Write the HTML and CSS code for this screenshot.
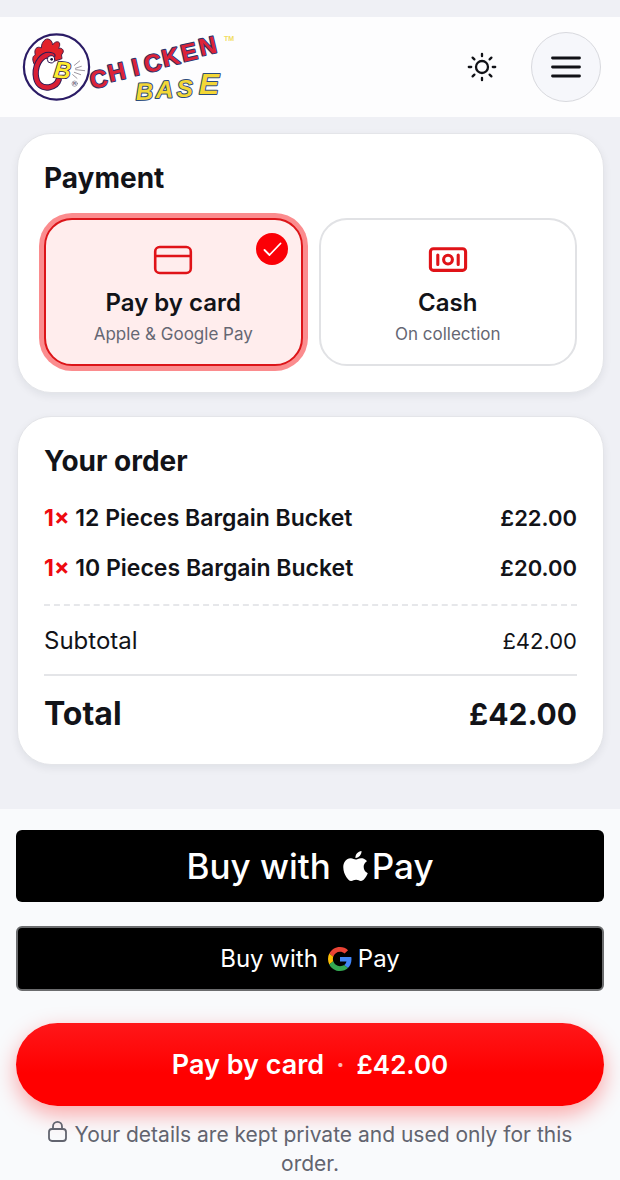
FILE: index.html
```html
<!DOCTYPE html>
<html lang="en">
<head>
<meta charset="utf-8">
<meta name="viewport" content="width=device-width, initial-scale=1">
<title>Chicken Base – Checkout</title>
<link rel="stylesheet" href="styles.css">
</head>
<body>
<header class="header">
  <a class="logo" href="#" aria-label="Chicken Base home">
    <svg width="214" height="74" viewBox="22 30 214 74" aria-hidden="true">
      <circle cx="56.5" cy="67" r="32.6" fill="#fff" stroke="#2b1c66" stroke-width="2.2"/>
      <g transform="translate(15 25) scale(.3333)" stroke-linecap="round" stroke-linejoin="round">
        <path d="M60 122 C50 106 52 92 61 90 C56 72 66 62 79 69 C79 51 92 38 102 43 C111 46 112 55 113 60 C120 47 134 48 134 57 C135 62 132 66 131 70 C144 67 149 80 141 87 C138 91 141 95 141 101 L120 108 L80 105 Z" fill="#e22229" stroke="#4b1d45" stroke-width="3"/>
        <path d="M74 118 C68 140 70 160 82 170 C94 180 116 172 124 160 L124 130 L106 106 L90 100 Z" fill="#fff"/>
        <path d="M112 92 C82 82 61 116 62 148 C64 180 82 190 102 187 C119 184 128 175 131 164" fill="none" stroke="#2f1a55" stroke-width="19"/>
        <path d="M112 92 C82 82 61 116 62 148 C64 180 82 190 102 187 C119 184 128 175 131 164" fill="none" stroke="#d91f35" stroke-width="13"/>
        <circle cx="108" cy="103" r="11" fill="#fff" stroke="#2f1a55" stroke-width="3"/>
        <circle cx="110" cy="103" r="4" fill="#16123a"/>
        <text class="logo-beak" x="115" y="157" transform="rotate(6 115 157)">B</text>
        <path d="M178 121 L194 108 M181 130 L199 124 M182 134 L209 137 M178 142 L197 149 M173 149 L186 160" fill="none" stroke="#6b6270" stroke-width="2"/>
        <circle cx="179" cy="176" r="8" fill="none" stroke="#55506a" stroke-width="1.5"/>
        <text class="logo-reg" x="174" y="181">R</text>
      </g>
      <text class="logo-chicken" x="92 110 134 146 164 183 201" y="89 82 76 73 67 62 56" rotate="-13">CHICKEN</text>
      <text class="logo-base" x="136 156 177" y="100 98 97" rotate="-2">BAS</text>
      <text class="logo-base logo-base-end" x="199" y="94">E</text>
      <text class="logo-tm" x="224" y="41">TM</text>
    </svg>
  </a>
  <div class="header-actions">
    <button class="theme-button" type="button" aria-label="Switch theme">
      <svg width="32" height="32" viewBox="0 0 32 32" fill="none" stroke="#101116" stroke-width="2.3" stroke-linecap="round" aria-hidden="true">
        <circle cx="16" cy="16" r="6"/>
        <path d="M16 2.8v2.4M16 26.8v2.4M2.8 16h2.4M26.8 16h2.4M6.6 6.6l1.8 1.8M23.6 23.6l1.8 1.8M6.6 25.4l1.8-1.8M23.6 8.4l1.8-1.8"/>
      </svg>
    </button>
    <button class="menu-button" type="button" aria-label="Open menu">
      <svg width="32" height="32" viewBox="0 0 32 32" fill="none" stroke="#101116" stroke-width="2.8" stroke-linecap="round" aria-hidden="true">
        <path d="M2.5 7h27M2.5 16h27M2.5 25h27"/>
      </svg>
    </button>
  </div>
</header>

<main class="content">
  <section class="card">
    <h2 class="card-title" id="payment-title">Payment</h2>
    <div class="options" role="radiogroup" aria-labelledby="payment-title">
      <label class="option">
        <input class="option-input" type="radio" name="payment" value="card" checked>
        <svg class="option-icon" width="40" height="40" viewBox="0 0 40 40" fill="none" stroke="#e01318" stroke-width="2.6" aria-hidden="true">
          <rect x="2.2" y="7" width="35.6" height="26" rx="4.5"/>
          <path d="M2 16h36"/>
        </svg>
        <span class="option-name">Pay by card</span>
        <span class="option-hint">Apple &amp; Google Pay</span>
        <span class="option-check">
          <svg width="32" height="32" viewBox="0 0 32 32" fill="none" stroke="#fff" stroke-width="1.8" stroke-linecap="round" stroke-linejoin="round" aria-hidden="true">
            <path d="M8.5 17l5 5L24.5 10.5"/>
          </svg>
        </span>
      </label>
      <label class="option">
        <input class="option-input" type="radio" name="payment" value="cash">
        <svg class="option-icon" width="40" height="40" viewBox="0 0 40 40" fill="none" stroke="#e01318" stroke-width="3.1" stroke-linecap="round" aria-hidden="true">
          <rect x="2.4" y="8.8" width="35.2" height="21.6" rx="3"/>
          <circle cx="20" cy="19.6" r="4.4"/>
          <path d="M9.8 15v9.4M30.2 15v9.4"/>
        </svg>
        <span class="option-name">Cash</span>
        <span class="option-hint">On collection</span>
        <span class="option-check">
          <svg width="32" height="32" viewBox="0 0 32 32" fill="none" stroke="#fff" stroke-width="1.8" stroke-linecap="round" stroke-linejoin="round" aria-hidden="true">
            <path d="M8.5 17l5 5L24.5 10.5"/>
          </svg>
        </span>
      </label>
    </div>
  </section>

  <section class="card">
    <h2 class="card-title">Your order</h2>
    <ul class="items">
      <li class="row"><span class="item-name"><b class="quantity">1×</b> 12 Pieces Bargain Bucket</span><span>£22.00</span></li>
      <li class="row"><span class="item-name"><b class="quantity">1×</b> 10 Pieces Bargain Bucket</span><span>£20.00</span></li>
    </ul>
    <div class="row subtotal"><span class="subtotal-label">Subtotal</span><span>£42.00</span></div>
    <div class="row total"><span class="total-label">Total</span><span>£42.00</span></div>
  </section>
</main>

<footer class="checkout">
  <button class="wallet apple-pay" type="button">
    <span>Buy with</span>
    <span class="wallet-brand">
      <svg width="25" height="30" viewBox="2 0 20 24" fill="#fff" aria-label="Apple" role="img"><path d="M12.152 6.896c-.948 0-2.415-1.078-3.96-1.04-2.04.027-3.91 1.183-4.961 3.014-2.117 3.675-.546 9.103 1.519 12.09 1.013 1.454 2.208 3.09 3.792 3.039 1.52-.065 2.09-.987 3.935-.987 1.831 0 2.35.987 3.96.948 1.637-.026 2.676-1.48 3.676-2.948 1.156-1.688 1.636-3.325 1.662-3.415-.039-.013-3.182-1.221-3.22-4.857-.026-3.04 2.48-4.494 2.597-4.559-1.429-2.09-3.623-2.324-4.39-2.376-2-.156-3.675 1.09-4.61 1.09zM15.53 3.83c.843-1.012 1.4-2.427 1.245-3.83-1.207.052-2.662.805-3.532 1.818-.78.896-1.454 2.338-1.273 3.714 1.338.104 2.715-.688 3.559-1.701"/></svg>
      <span>Pay</span>
    </span>
  </button>
  <button class="wallet google-pay" type="button">
    <span>Buy with</span>
    <span class="wallet-brand">
      <svg width="24" height="24" viewBox="0 0 48 48" aria-label="Google" role="img">
        <path fill="#EA4335" d="M24 9.5c3.54 0 6.71 1.22 9.21 3.6l6.85-6.85C35.9 2.38 30.47 0 24 0 14.62 0 6.51 5.38 2.56 13.22l7.98 6.19C12.43 13.72 17.74 9.5 24 9.5z"/>
        <path fill="#4285F4" d="M46.98 24.55c0-1.57-.15-3.09-.38-4.55H24v9.02h12.94c-.58 2.96-2.26 5.48-4.78 7.18l7.73 6c4.51-4.18 7.09-10.36 7.09-17.65z"/>
        <path fill="#FBBC05" d="M10.53 28.59c-.48-1.45-.76-2.99-.76-4.59s.27-3.14.76-4.59l-7.98-6.19C.92 16.46 0 20.12 0 24c0 3.88.92 7.54 2.56 10.78l7.97-6.19z"/>
        <path fill="#34A853" d="M24 48c6.48 0 11.93-2.13 15.89-5.81l-7.73-6c-2.15 1.45-4.92 2.3-8.16 2.3-6.26 0-11.57-4.22-13.47-9.91l-7.98 6.19C6.51 42.62 14.62 48 24 48z"/>
      </svg>
      <span>Pay</span>
    </span>
  </button>
  <button class="pay-button" type="button"><span class="pay-label">Pay by card</span><span class="pay-dot">·</span><span>£42.00</span></button>
  <p class="privacy">
    <svg class="lock" width="19" height="21" viewBox="0 0 19 21" fill="none" stroke="#62646f" stroke-width="1.8" aria-hidden="true">
      <rect x="1" y="8" width="17" height="12" rx="3"/>
      <path d="M5 8V5.400a4.500 4.500 0 0 1 9 0V8"/>
    </svg>
    Your details are kept private and used only for this order.
  </p>
</footer>
</body>
</html>
```
FILE: styles.css
```css
* {
  box-sizing: border-box;
}

body {
  margin: 0;
  padding-top: 17px;
  background: #eff0f5;
  color: #121318;
  font-family: Inter, "Noto Sans", sans-serif;
}

button {
  margin: 0;
  padding: 0;
  border: 0;
  font: inherit;
  cursor: pointer;
}

svg {
  display: block;
  flex-shrink: 0;
}

.header {
  display: flex;
  align-items: center;
  justify-content: space-between;
  min-height: 100px;
  padding: 0 19px 0 22px;
  background: #fdfdfe;
}

.logo-chicken,
.logo-base,
.logo-beak {
  font-family: "Liberation Sans", sans-serif;
  font-weight: 700;
  paint-order: stroke;
  stroke-linejoin: round;
}

.logo-chicken {
  font-size: 24px;
  fill: #dc2338;
  stroke: #28356f;
  stroke-width: 2px;
}

.logo-base {
  font-size: 24px;
  font-style: italic;
  fill: #f3d736;
  stroke: #2c4c7c;
  stroke-width: 2px;
}

.logo-base-end {
  font-size: 30px;
}

.logo-beak {
  font-size: 70px;
  font-style: italic;
  fill: #ffec2e;
  stroke: #2f1a55;
  stroke-width: 5px;
}

.logo-reg,
.logo-tm {
  font-family: "Liberation Sans", sans-serif;
  font-weight: 700;
}

.logo-reg {
  font-size: 13px;
  fill: #55506a;
}

.logo-tm {
  font-size: 7px;
  fill: #f1dc5e;
}

.header-actions {
  display: flex;
  align-items: center;
  gap: 14px;
}

.theme-button,
.menu-button {
  display: grid;
  place-items: center;
  width: 70px;
  height: 70px;
  border-radius: 50%;
  background: transparent;
}

.menu-button {
  border: 1px solid #d8d9de;
  background: #f6f7fb;
}

.content {
  display: flex;
  flex-direction: column;
  gap: 23px;
  padding: 16px 16px 44px 17px;
}

.card {
  padding: 26px;
  border: 1px solid #e4e5e9;
  border-radius: 34px;
  background: #fff;
  box-shadow: 0 3px 8px rgba(20, 22, 40, 0.07);
}

.card-title {
  margin: 0 0 22px;
  font-size: 28px;
  line-height: 36px;
  font-weight: 700;
}

.options {
  display: grid;
  grid-template-columns: 1fr 1fr;
  gap: 16px;
}

.option {
  position: relative;
  display: flex;
  flex-direction: column;
  align-items: center;
  padding: 20px 16px 16px;
  border: 2px solid #e1e2e5;
  border-radius: 28px;
  background: #fff;
  text-align: center;
  cursor: pointer;
}

.option:has(:checked) {
  border-color: #dc1519;
  background: #ffeded;
  box-shadow: 0 0 0 5px #fb8c8e;
}

.option-input {
  position: absolute;
  opacity: 0;
}

.option-icon {
  margin-bottom: 6px;
}

.option-name {
  font-size: 24px;
  line-height: 34px;
  font-weight: 600;
}

.option-hint {
  color: #656773;
  font-size: 17px;
  line-height: 28px;
}

.option-check {
  display: none;
  position: absolute;
  top: 13px;
  right: 13px;
  border-radius: 50%;
  background: #fb0006;
}

.option-input:checked ~ .option-check {
  display: block;
}

.items {
  display: flex;
  flex-direction: column;
  gap: 16px;
  margin: 0;
  padding: 0 0 19px;
  border-bottom: 2px dashed #e6e7ea;
  list-style: none;
  font-weight: 600;
}

.row {
  display: flex;
  align-items: center;
  justify-content: space-between;
  gap: 16px;
  font-size: 22px;
  line-height: 34px;
}

.item-name {
  font-size: 23px;
}

.quantity {
  color: #ee0a10;
  font-weight: 700;
}

.subtotal {
  padding: 18px 0 16px;
  border-bottom: 2px solid #e4e5e8;
}

.subtotal-label {
  font-size: 24px;
}

.total {
  padding-top: 14px;
  font-size: 30px;
  line-height: 48px;
  font-weight: 700;
}

.total-label {
  font-size: 32px;
}

.checkout {
  padding: 21px 16px 2px;
  background: #f9fafc;
}

.wallet {
  display: flex;
  align-items: center;
  justify-content: center;
  width: 100%;
  border-radius: 6px;
  background: #000;
  color: #fff;
}

.wallet-brand {
  display: flex;
  align-items: center;
}

.apple-pay {
  gap: 12px;
  min-height: 72px;
  margin-bottom: 24px;
  font-size: 35px;
  font-weight: 500;
}

.apple-pay .wallet-brand {
  gap: 4px;
}

.google-pay {
  gap: 10px;
  min-height: 65px;
  margin-bottom: 32px;
  border: 2px solid #6b6c6e;
  font-size: 24px;
}

.google-pay .wallet-brand {
  gap: 6px;
}

.pay-button {
  display: flex;
  align-items: center;
  justify-content: center;
  gap: 12px;
  width: 100%;
  min-height: 83px;
  border-radius: 42px;
  background: linear-gradient(#ff1719, #ff0000 60%);
  box-shadow: 0 8px 22px rgba(255, 0, 0, 0.34);
  color: #fff;
  font-size: 26px;
  font-weight: 600;
}

.pay-label {
  font-size: 27px;
}

.pay-dot {
  opacity: 0.7;
}

.privacy {
  margin: 14px 0 0;
  padding: 0 24px;
  color: #62646f;
  font-size: 21px;
  line-height: 29px;
  text-align: center;
}

.lock {
  display: inline-block;
  margin-right: 2px;
}
```
